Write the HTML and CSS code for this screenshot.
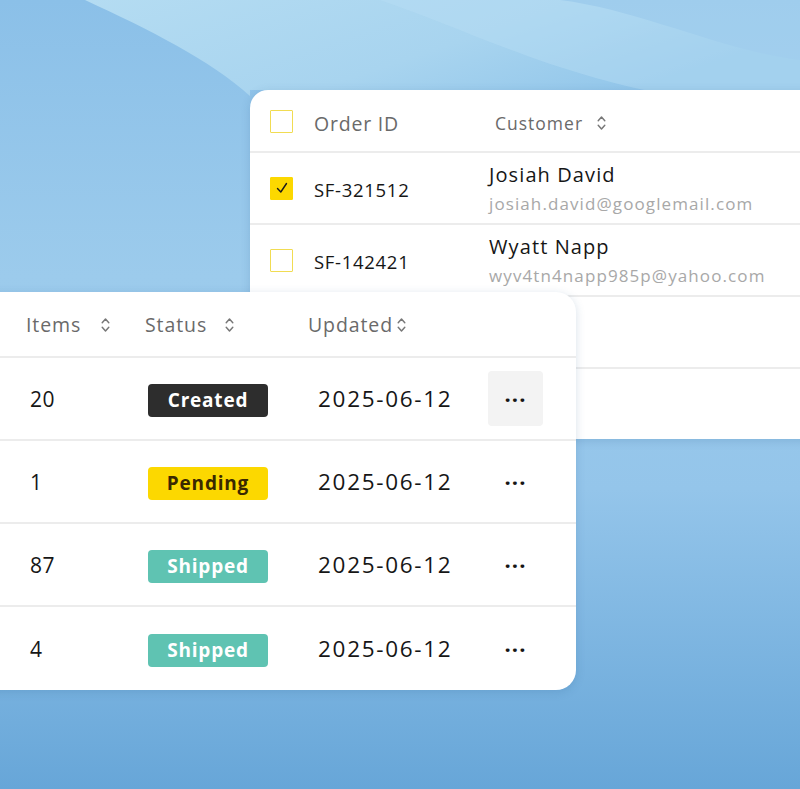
FILE: index.html
```html
<!DOCTYPE html>
<html lang="en">
<head>
<meta charset="utf-8">
<title>Orders</title>
<link rel="stylesheet" href="styles.css">
</head>
<body>
<div class="stage">
  <svg class="backdrop" width="800" height="789" viewBox="0 0 800 789" preserveAspectRatio="none" aria-hidden="true">
    <defs>
      <linearGradient id="base" x1="0" y1="0" x2="0" y2="1">
        <stop offset="0" stop-color="#8bc0e8"/>
        <stop offset="0.35" stop-color="#9ccbec"/>
        <stop offset="0.62" stop-color="#94c5ea"/>
        <stop offset="1" stop-color="#67a6d8"/>
      </linearGradient>
      <linearGradient id="wave" x1="0" y1="0" x2="1" y2="0.4">
        <stop offset="0" stop-color="#b4dcf2"/>
        <stop offset="0.6" stop-color="#a8d4ef"/>
        <stop offset="1" stop-color="#92c6ea"/>
      </linearGradient>
    </defs>
    <rect width="800" height="789" fill="url(#base)"/>
    <path d="M85 0 C150 30 210 60 250 96 L250 90 L800 90 L800 60 C720 50 640 10 560 0 Z" fill="url(#wave)"/>
    <path d="M380 0 C470 30 560 80 700 100 L800 100 L800 0 Z" fill="#b8def3" opacity="0.45"/>
  </svg>

  <section class="card card-back">
    <div class="brow bhead">
      <span class="check"></span>
      <span class="bh-order">Order ID</span>
      <span class="bh-cust">Customer <svg class="sort" viewBox="0 0 10 16"><path d="M2 6 L5 2.5 L8 6 M2 10 L5 13.5 L8 10"/></svg></span>
    </div>
    <div class="brow">
      <span class="check on"><svg viewBox="0 0 16 16"><path d="M3.5 8.5 L6.8 12 L12.5 3.5"/></svg></span>
      <span class="oid">SF-321512</span>
      <span class="cust"><span class="cname">Josiah David</span><span class="cmail">josiah.david@googlemail.com</span></span>
    </div>
    <div class="brow">
      <span class="check"></span>
      <span class="oid">SF-142421</span>
      <span class="cust"><span class="cname">Wyatt Napp</span><span class="cmail">wyv4tn4napp985p@yahoo.com</span></span>
    </div>
    <div class="brow"></div>
    <div class="brow last"></div>
  </section>

  <section class="card card-front">
    <div class="frow fhead">
      <span class="fh fh-items">Items <svg class="sort" viewBox="0 0 10 16"><path d="M2 6 L5 2.5 L8 6 M2 10 L5 13.5 L8 10"/></svg></span>
      <span class="fh fh-status">Status <svg class="sort" viewBox="0 0 10 16"><path d="M2 6 L5 2.5 L8 6 M2 10 L5 13.5 L8 10"/></svg></span>
      <span class="fh fh-upd">Updated<svg class="sort" viewBox="0 0 10 16"><path d="M2 6 L5 2.5 L8 6 M2 10 L5 13.5 L8 10"/></svg></span>
      <span></span>
    </div>
    <div class="frow">
      <span class="num">20</span>
      <span><span class="badge created">Created</span></span>
      <span class="date">2025-06-12</span>
      <span class="more active">&middot;&middot;&middot;</span>
    </div>
    <div class="frow">
      <span class="num">1</span>
      <span><span class="badge pending">Pending</span></span>
      <span class="date">2025-06-12</span>
      <span class="more">&middot;&middot;&middot;</span>
    </div>
    <div class="frow">
      <span class="num">87</span>
      <span><span class="badge shipped">Shipped</span></span>
      <span class="date">2025-06-12</span>
      <span class="more">&middot;&middot;&middot;</span>
    </div>
    <div class="frow last">
      <span class="num">4</span>
      <span><span class="badge shipped">Shipped</span></span>
      <span class="date">2025-06-12</span>
      <span class="more">&middot;&middot;&middot;</span>
    </div>
  </section>
</div>
</body>
</html>
```

FILE: styles.css
```css
* { box-sizing: border-box; }
html, body { margin: 0; padding: 0; }
body {
  width: 800px;
  height: 789px;
  overflow: hidden;
  font-family: "Open Sans", "Noto Sans", sans-serif;
  color: #161616;
}
.stage {
  position: relative;
  width: 800px;
  height: 789px;
  overflow: hidden;
  background: #8cc0e8;
}
.backdrop {
  position: absolute;
  left: 0;
  top: 0;
}
.card {
  position: absolute;
  background: #ffffff;
  box-shadow: 0 2px 10px rgba(40, 90, 140, 0.18);
}
.card-back {
  left: 250px;
  top: 90px;
  width: 620px;
  border-radius: 18px 0 0 0;
}
.brow {
  display: grid;
  grid-template-columns: 44px 175px 1fr;
  align-items: center;
  height: 72px;
  padding-left: 20px;
  border-bottom: 2px solid #ececec;
}
.brow.last { border-bottom: none; height: 70px; }
.brow.bhead { height: 63px; padding-top: 5px; }
.brow.bhead .check { margin-top: -3px; }
.check {
  width: 23px;
  height: 23px;
  border: 1.5px solid #f1dc52;
  border-radius: 1px;
  display: flex;
  align-items: center;
  justify-content: center;
}
.check.on {
  background: #fcd800;
  border-color: #fcd800;
}
.check svg { width: 16px; height: 16px; }
.check svg path { fill: none; stroke: #1a1a1a; stroke-width: 1.4; stroke-linecap: round; stroke-linejoin: round; }
.bh-order {
  font-size: 19.5px;
  letter-spacing: 0.8px;
  color: #6a6a6a;
}
.bh-cust {
  font-size: 17.5px;
  letter-spacing: 1px;
  color: #6a6a6a;
  padding-left: 6px;
  display: flex;
  align-items: center;
  gap: 13px;
}
.sort { width: 11px; height: 18px; }
.sort path { fill: none; stroke: #777; stroke-width: 1.3; stroke-linecap: round; stroke-linejoin: round; }
.oid {
  font-size: 18.5px;
  letter-spacing: 0.7px;
  color: #161616;
  padding-top: 3px;
}
.cust {
  display: flex;
  flex-direction: column;
  gap: 4px;
  margin-top: -1px;
}
.cname { font-size: 20px; letter-spacing: 1.1px; color: #161616; }
.cmail { font-size: 17px; letter-spacing: 1.1px; color: #a8a8a8; }

.card-front {
  left: -30px;
  top: 292px;
  width: 606px;
  border-radius: 0 20px 20px 0;
}
.frow {
  display: grid;
  grid-template-columns: 119px 163px 180px 55px;
  align-items: center;
  height: 83px;
  padding-left: 56px;
  border-bottom: 2px solid #ececec;
}
.frow.last { border-bottom: none; }
.frow.fhead { height: 66px; padding-top: 1px; }
.fh {
  font-size: 19.5px;
  letter-spacing: 0.9px;
  color: #6a6a6a;
  display: flex;
  align-items: center;
}
.fh-items .sort { margin-left: 19px; }
.fh-status .sort { margin-left: 17px; }
.fh-upd .sort { margin-left: 3px; }
.num { font-size: 21px; padding-left: 4px; letter-spacing: 0.5px; }
.badge {
  display: inline-block;
  width: 120px;
  height: 33px;
  line-height: 33px;
  text-align: center;
  border-radius: 4px;
  font-size: 19px;
  font-weight: 700;
  letter-spacing: 0.8px;
  margin-left: 3px;
  margin-top: 3px;
}
.badge.created { background: #2d2d2d; color: #ffffff; }
.badge.pending { background: #fcd800; color: #3a2800; }
.badge.shipped { background: #5fc3b2; color: #ffffff; }
.date { font-size: 22.5px; padding-left: 10px; letter-spacing: 1.7px; }
.more {
  width: 55px;
  height: 55px;
  display: flex;
  align-items: center;
  justify-content: center;
  font-size: 22px;
  font-weight: 700;
  letter-spacing: 1px;
  border-radius: 4px;
  color: #161616;
}
.more.active { background: #f3f3f3; }
```
